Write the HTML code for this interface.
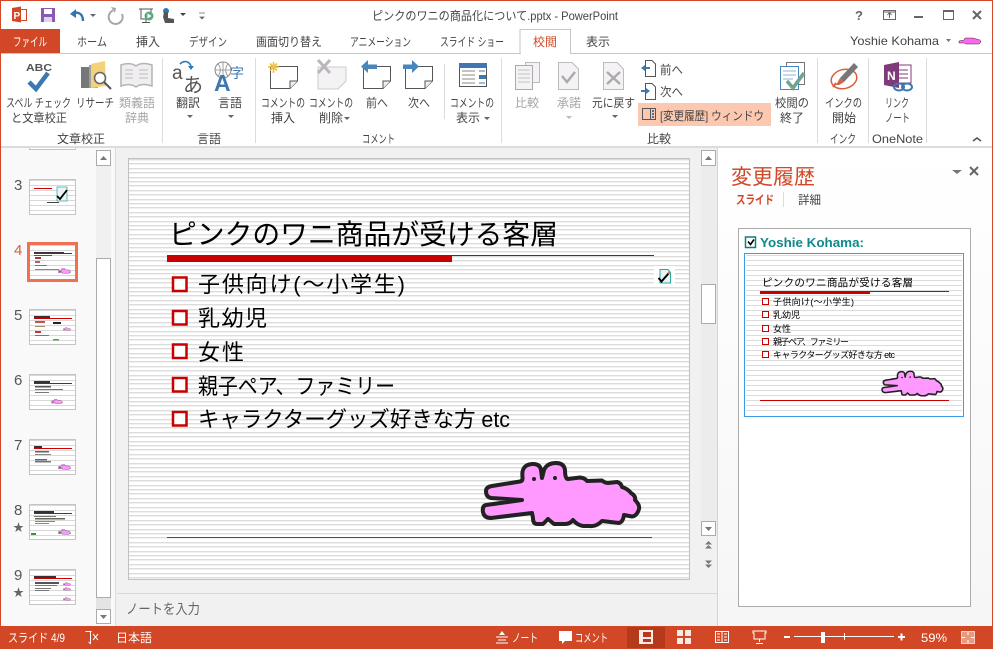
<!DOCTYPE html>
<html lang="ja"><head><meta charset="utf-8"><title>PowerPoint</title>
<style>
html,body{margin:0;padding:0;width:993px;height:649px;overflow:hidden;background:#fff}
svg{display:block;position:absolute;left:0;top:0}
text{font-family:"Liberation Sans","Noto Sans CJK JP",sans-serif;font-size:12px;fill:#444}
.g{fill:#a6a6a6}
.w{fill:#fff}
.s{fill:#000}
</style></head><body>
<svg width="993" height="649" viewBox="0 0 993 649" xmlns="http://www.w3.org/2000/svg" shape-rendering="auto">
<defs>
<pattern id="st" width="4" height="22" patternUnits="userSpaceOnUse" y="159">
<rect width="4" height="22" fill="#fff"/>
<g fill="#dcdcdc"><rect y="0" width="4" height="1"/><rect y="4" width="4" height="1"/><rect y="9" width="4" height="1"/><rect y="13" width="4" height="1"/><rect y="18" width="4" height="1"/></g>
<g fill="#f1f1f1"><rect y="1" width="4" height="1"/><rect y="5" width="4" height="1"/><rect y="10" width="4" height="1"/><rect y="14" width="4" height="1"/><rect y="19" width="4" height="1"/></g>
</pattern>
<pattern id="st2" width="3" height="5" patternUnits="userSpaceOnUse" y="255">
<rect width="3" height="5" fill="#fff"/><rect y="0" width="3" height="1" fill="#dcdcdc"/>
</pattern>
<pattern id="st3" width="3" height="5" patternUnits="userSpaceOnUse">
<rect width="3" height="5" fill="#fff"/><rect y="0" width="3" height="1" fill="#d8d8d8"/>
</pattern>
<linearGradient id="pn" x1="0" y1="0" x2="0" y2="1"><stop offset="0" stop-color="#fff"/><stop offset="1" stop-color="#f6f6f6"/></linearGradient>
<symbol id="croc" viewBox="480 460 162 69" width="162" height="69">
<path d="M486 491Q486 487 492 486L520 481.500Q523 481 522.500 477Q521 465 532 464Q540 463.500 541 470L542 478L544 470Q547 463 556 463Q564 463 565 470Q565 479 568 479L580 477.500Q585 478 587 481L602 480.500Q605 483 608 483L617 482Q621 483 622 487Q628 489 631 493Q636 496 635 500Q640 505 639 509Q637 516 632 516.500L624 515Q623 522 619 523L602 521Q596 527 590 526L583 526Q577 525 573 520Q570 524 565 524L554 524L548 519L543 524L537 524Q533 524 533 518L532 513L491 518Q484 518 483 512Q482 506 486 505L522 500L491 498Q486 497 486 491Z" fill="#ff99ff" stroke="#222" stroke-width="4" stroke-linejoin="round"/>
<circle cx="534" cy="479" r="2" fill="#222"/><circle cx="555" cy="478" r="2" fill="#222"/>
</symbol>
</defs>

<!-- chrome -->
<rect width="993" height="649" fill="#fff"/>
<rect y="0" width="993" height="1" fill="#d24726"/>
<rect y="29" width="60" height="24" fill="#d24726"/>
<rect y="53" width="993" height="1" fill="#c6c6c6"/>
<path d="M520 53V29.500H570.500V53" fill="#fff" stroke="#c6c6c6"/><rect x="521" y="53" width="49" height="1" fill="#fff"/>
<rect y="146" width="993" height="2" fill="#dcdcdc"/>

<!-- QAT -->
<rect x="12.500" y="9.500" width="14" height="11" fill="#fff" stroke="#d24726"/><path d="M12 8L21 6.500V22.500L12 21Z" fill="#d24726"/><text x="13.500" y="19" style="font-size:10px;font-weight:bold;fill:#fff">P</text>
<rect x="41" y="8" width="14" height="14" fill="#8a5bb5"/><rect x="44" y="9" width="8" height="5" fill="#fff"/><rect x="44" y="17" width="8" height="5" fill="#e0d4ea"/>
<path d="M83 21C83 13 77 11 72 14" fill="none" stroke="#2f76b5" stroke-width="2.400"/><path d="M70 14L76 9V18Z" fill="#2f76b5"/>
<path d="M90 14h6l-3 3z" fill="#666"/>
<path d="M113 10.500A7 7 0 1 0 122 14" fill="none" stroke="#a6a6a6" stroke-width="2"/><path d="M111 7l5 1-1 5z" fill="#a6a6a6"/>
<path d="M139 9h14M141 9v10h10V9M146 19v3M142 22.500h8" fill="none" stroke="#555"/><circle cx="149" cy="16" r="4.500" fill="#5aaa80"/><path d="M147.500 13.500l4 2.500-4 2.500z" fill="#fff"/>
<circle cx="166" cy="11" r="3" fill="#2f76b5"/><path d="M164 12h4v6l6 1v4h-9l-2-6z" fill="#555"/>
<path d="M180 13h6l-3 3z" fill="#444"/>
<path d="M199 13h6M200 17h4l-2 2z" fill="#666" stroke="#666" stroke-width=".7"/>

<!-- title -->
<text x="372" y="20" textLength="246" lengthAdjust="spacingAndGlyphs">ピンクのワニの商品化について.pptx - PowerPoint</text>
<text x="855" y="20" style="font-size:13px;font-weight:bold;fill:#666">?</text>
<rect x="883.500" y="10.500" width="12" height="9" fill="none" stroke="#666"/><path d="M889.500 18v-5M887.500 15l2-2.500 2 2.500M884 12h11" stroke="#666" fill="none"/>
<rect x="914" y="16" width="9" height="2" fill="#666"/>
<rect x="943.500" y="10.500" width="10" height="9" fill="none" stroke="#666"/><rect x="943" y="10" width="11" height="2" fill="#666"/>
<path d="M973 11l8 8M981 11l-8 8" stroke="#666" stroke-width="2"/>

<!-- tabs -->
<text x="13" y="46" textLength="34" lengthAdjust="spacingAndGlyphs" class="w">ファイル</text>
<text x="77" y="46" textLength="30" lengthAdjust="spacingAndGlyphs">ホーム</text>
<text x="136" y="46" textLength="24" lengthAdjust="spacingAndGlyphs">挿入</text>
<text x="189" y="46" textLength="38" lengthAdjust="spacingAndGlyphs">デザイン</text>
<text x="256" y="46" textLength="66" lengthAdjust="spacingAndGlyphs">画面切り替え</text>
<text x="350" y="46" textLength="61" lengthAdjust="spacingAndGlyphs">アニメーション</text>
<text x="440" y="46" textLength="64" lengthAdjust="spacingAndGlyphs">スライド ショー</text>
<text x="533" y="46" textLength="24" lengthAdjust="spacingAndGlyphs" style="fill:#d24726">校閲</text>
<text x="586" y="46" textLength="24" lengthAdjust="spacingAndGlyphs">表示</text>
<text x="850" y="45" textLength="89" lengthAdjust="spacingAndGlyphs">Yoshie Kohama</text>
<path d="M946 39h5l-2.500 3z" fill="#777"/>
<path d="M959 41l5-1 1-2h8l7 2 1 2-2 2h-13l-2-1-5 0z" fill="#ff66ee" stroke="#333" stroke-width=".5"/>

<!-- ribbon separators -->
<g fill="#dcdcdc">
<rect x="162" y="58" width="1" height="85"/><rect x="255" y="58" width="1" height="85"/><rect x="501" y="58" width="1" height="85"/>
<rect x="817" y="58" width="1" height="85"/><rect x="868" y="58" width="1" height="85"/><rect x="926" y="58" width="1" height="85"/>
<rect x="444" y="64" width="1" height="55"/>
</g>
<rect x="638" y="103" width="133" height="23" fill="#fcc9b0"/>

<!-- ribbon: proofing -->
<text x="26" y="71" textLength="26" lengthAdjust="spacingAndGlyphs" style="font-size:10.500px;font-weight:bold;fill:#555">ABC</text>
<path d="M29 82l7 7 12-16" fill="none" stroke="#3f78b0" stroke-width="4.500"/>
<rect x="81" y="67" width="9" height="21" fill="#777"/><rect x="89" y="65" width="9" height="23" fill="#a0a0a0"/>
<path d="M91 64l14-3 1 25-15 2z" fill="#f3d27c"/><circle cx="100" cy="78" r="5.500" fill="#fff" stroke="#666" stroke-width="1.600"/><path d="M104 82l7 7" stroke="#555" stroke-width="2"/>
<path d="M121 65c5-2 11-2 15 1c4-3 10-3 16-1v21c-6-2-12-2-16 1c-4-3-10-3-15-1z" fill="#f0eef0" stroke="#b4b4b4" stroke-width="1.500"/><path d="M125 70h8M125 74h8M125 78h8M139 70h9M139 74h9M139 78h9" stroke="#bbb"/>
<text x="6" y="107" textLength="65" lengthAdjust="spacingAndGlyphs">スペル チェック</text>
<text x="11" y="122" textLength="56" lengthAdjust="spacingAndGlyphs">と文章校正</text>
<text x="76" y="107" textLength="38" lengthAdjust="spacingAndGlyphs">リサーチ</text>
<text x="119" y="107" textLength="36" lengthAdjust="spacingAndGlyphs" class="g">類義語</text>
<text x="125" y="122" textLength="24" lengthAdjust="spacingAndGlyphs" class="g">辞典</text>
<text x="57" y="143" textLength="48" lengthAdjust="spacingAndGlyphs">文章校正</text>

<!-- language -->
<text x="172" y="79" style="font-size:19px;fill:#555">a</text>
<text x="183" y="92" style="font-size:20px;fill:#555">あ</text>
<path d="M180 64c4-4 9-3 11 2" fill="none" stroke="#2f76b5" stroke-width="1.600"/><path d="M188 66h6l-3 4z" fill="#2f76b5"/>
<text x="176" y="107" textLength="24" lengthAdjust="spacingAndGlyphs">翻訳</text><path d="M187 115h6l-3 3z" fill="#666"/>
<circle cx="223" cy="70" r="8" fill="none" stroke="#888"/><path d="M215 70h16M223 62v16M218 64c3 3 3 9 0 12M228 64c-3 3-3 9 0 12" stroke="#888" fill="none" stroke-width=".8"/>
<text x="214" y="91" style="font-size:23px;font-weight:bold;fill:#3f78b0">A</text>
<text x="230" y="78" style="font-size:14px;fill:#3f78b0">字</text>
<text x="218" y="107" textLength="24" lengthAdjust="spacingAndGlyphs">言語</text><path d="M228 115h6l-3 3z" fill="#666"/>
<text x="197" y="143" textLength="24" lengthAdjust="spacingAndGlyphs">言語</text>

<!-- comments -->
<path d="M270.500 66.500H297.500V81L290 88.500H270.500Z" fill="#fff" stroke="#555"/><path d="M297.500 81H290V88.500" fill="#eee" stroke="#555"/>
<path d="M268 67h11M273.500 62v11M270 63.500l7 7M277 63.500l-7 7" stroke="#f0c040" stroke-width="1.600"/>
<text x="261" y="107" textLength="44" lengthAdjust="spacingAndGlyphs">コメントの</text>
<text x="271" y="122" textLength="24" lengthAdjust="spacingAndGlyphs">挿入</text>
<path d="M318 67H346V81L338 89H318Z" fill="#f4f2f4" stroke="#ccc"/>
<path d="M318 60l12 13M330 60l-12 13" stroke="#b8b8b8" stroke-width="3"/>
<text x="309" y="107" textLength="44" lengthAdjust="spacingAndGlyphs">コメントの</text>
<text x="319" y="122" textLength="24" lengthAdjust="spacingAndGlyphs">削除</text><path d="M344 117h6l-3 3z" fill="#666"/>
<path d="M363.500 66.500H390.500V81L383 88.500H363.500Z" fill="#fff" stroke="#555"/><path d="M390.500 81H383V88.500" fill="#eee" stroke="#555"/>
<path d="M361 66.500l7-6.500v4.500h9v4.500h-9v4z" fill="#4a86be"/>
<text x="366" y="107" textLength="22" lengthAdjust="spacingAndGlyphs">前へ</text>
<path d="M405.500 66.500H432.500V81L425 88.500H405.500Z" fill="#fff" stroke="#555"/><path d="M432.500 81H425V88.500" fill="#eee" stroke="#555"/>
<path d="M419 66.500l-7-6.500v4.500h-9v4.500h9v4z" fill="#4a86be"/>
<text x="408" y="107" textLength="22" lengthAdjust="spacingAndGlyphs">次へ</text>
<rect x="459.500" y="63.500" width="27" height="23" fill="#fff" stroke="#555"/><rect x="459" y="63" width="28" height="5" fill="#3f78b0"/>
<path d="M462 71h13M462 75h13M462 79h13M462 83h13" stroke="#888"/><path d="M479 71h6M479 83h6" stroke="#3f78b0"/><rect x="479" y="75" width="7" height="4" fill="#3f78b0"/>
<text x="450" y="107" textLength="44" lengthAdjust="spacingAndGlyphs">コメントの</text>
<text x="456" y="122" textLength="24" lengthAdjust="spacingAndGlyphs">表示</text><path d="M484 117h6l-3 3z" fill="#666"/>
<text x="362" y="143" textLength="33" lengthAdjust="spacingAndGlyphs">コメント</text>

<!-- compare -->
<rect x="525.500" y="62.500" width="14" height="20" fill="#f4f2f4" stroke="#bbb"/>
<rect x="515.500" y="65.500" width="17" height="24" fill="#f4f2f4" stroke="#aaa"/><path d="M518 70h12M518 74h12M518 78h12M518 82h12" stroke="#c4c4c4"/>
<path d="M558.500 62.500H572L578.500 69V89.500H558.500Z" fill="#f4f2f4" stroke="#bbb"/><path d="M562 76l5 6 8-10" fill="none" stroke="#aaa" stroke-width="2.400"/>
<path d="M603.500 62.500H617L623.500 69V89.500H603.500Z" fill="#f4f2f4" stroke="#bbb"/><path d="M607 72l13 12M620 72l-13 12" stroke="#aaa" stroke-width="2.400"/>
<text x="515" y="107" textLength="24" lengthAdjust="spacingAndGlyphs" class="g">比較</text>
<text x="557" y="107" textLength="24" lengthAdjust="spacingAndGlyphs" class="g">承諾</text><path d="M566 116h6l-3 3z" fill="#bbb"/>
<text x="592" y="107" textLength="43" lengthAdjust="spacingAndGlyphs">元に戻す</text><path d="M612 115h6l-3 3z" fill="#666"/>
<path d="M645.500 60.500H652L655.500 64V76.500H645.500Z" fill="#fff" stroke="#555"/><path d="M641 68l4-3v2h5v2h-5v2z" fill="#3f78b0"/>
<path d="M645.500 83.500H652L655.500 87V99.500H645.500Z" fill="#fff" stroke="#555"/><path d="M650 91l-4-3v2h-5v2h5v2z" fill="#3f78b0"/>
<text x="660" y="74" textLength="23" lengthAdjust="spacingAndGlyphs">前へ</text>
<text x="660" y="96" textLength="23" lengthAdjust="spacingAndGlyphs">次へ</text>
<rect x="642.500" y="108.500" width="13" height="11" fill="none" stroke="#555"/><path d="M650.500 108.500V119.500" stroke="#555"/><rect x="652" y="110" width="2" height="2" fill="#3f78b0"/><rect x="652" y="113" width="2" height="2" fill="#3f78b0"/><rect x="652" y="116" width="2" height="2" fill="#3f78b0"/>
<text x="660" y="120" textLength="104" lengthAdjust="spacingAndGlyphs">[変更履歴] ウィンドウ</text>
<text x="647" y="143" textLength="24" lengthAdjust="spacingAndGlyphs">比較</text>

<!-- end review -->
<rect x="786.500" y="62.500" width="18" height="22" fill="#fff" stroke="#777"/>
<rect x="780.500" y="66.500" width="18" height="23" fill="#fff" stroke="#4a86be"/><path d="M783 71h13M783 75h13M783 79h10" stroke="#8fb4d8"/>
<path d="M787 81l6 7 11-15" fill="none" stroke="#6fa48e" stroke-width="3.600"/>
<text x="775" y="107" textLength="34" lengthAdjust="spacingAndGlyphs">校閲の</text>
<text x="780" y="122" textLength="24" lengthAdjust="spacingAndGlyphs">終了</text>
<!-- ink -->
<ellipse cx="844" cy="79" rx="13" ry="9.500" fill="none" stroke="#d9603e" stroke-width="1.500" transform="rotate(-15 844 79)"/>
<path d="M840 78l14-15 4 4-14 15z" fill="#777"/><path d="M840 78l4 4-5 3-3 0z" fill="#d9603e"/><path d="M836 83l-3 4" stroke="#d9603e" stroke-width="2"/>
<text x="825" y="107" textLength="37" lengthAdjust="spacingAndGlyphs">インクの</text>
<text x="832" y="122" textLength="24" lengthAdjust="spacingAndGlyphs">開始</text>
<text x="830" y="143" textLength="26" lengthAdjust="spacingAndGlyphs">インク</text>
<!-- onenote -->
<rect x="896" y="65" width="15" height="18" fill="#fff" stroke="#80397b"/><path d="M899 70h9M899 74h9M899 78h9" stroke="#80397b"/>
<path d="M884 65l15-3V88l-15-3z" fill="#80397b"/><text x="887" y="80" style="font-size:12px;font-weight:bold;fill:#fff">N</text>
<ellipse cx="899" cy="87" rx="5" ry="3.500" fill="none" stroke="#3f78b0" stroke-width="2"/><ellipse cx="907" cy="87" rx="5" ry="3.500" fill="none" stroke="#3f78b0" stroke-width="2"/>
<text x="885" y="107" textLength="24" lengthAdjust="spacingAndGlyphs">リンク</text>
<text x="885" y="122" textLength="25" lengthAdjust="spacingAndGlyphs">ノート</text>
<text x="872" y="143" textLength="51" lengthAdjust="spacingAndGlyphs">OneNote</text>
<path d="M973 141l4-3 4 3" fill="none" stroke="#555" stroke-width="1.600"/>

<!-- thumb panel -->
<rect x="1" y="148" width="114" height="478" fill="#f9f9f9"/>
<rect x="0" y="0" width="1" height="649" fill="#d24726"/>
<rect x="992" y="0" width="1" height="649" fill="#d24726"/>
<rect x="96" y="150" width="15" height="474" fill="#f0f0f0"/>
<rect x="96.500" y="150.500" width="14" height="15" fill="#fff" stroke="#ababab"/><path d="M100 160l3.500-4 3.500 4z" fill="#777"/>
<rect x="96.500" y="258.500" width="14" height="339" fill="#fff" stroke="#ababab"/>
<rect x="96" y="598" width="15" height="11" fill="#e4e4e4"/>
<rect x="96.500" y="609.500" width="14" height="14" fill="#fff" stroke="#ababab"/><path d="M100 615h7l-3.500 4z" fill="#777"/>
<rect x="115" y="148" width="1" height="478" fill="#dcdcdc"/>

<text x="14" y="190" style="font-size:15px;fill:#555">3</text>
<text x="14" y="255" style="font-size:15px;fill:#d9603e">4</text>
<text x="14" y="320" style="font-size:15px;fill:#555">5</text>
<text x="14" y="385" style="font-size:15px;fill:#555">6</text>
<text x="14" y="450" style="font-size:15px;fill:#555">7</text>
<text x="14" y="515" style="font-size:15px;fill:#555">8</text>
<text x="14" y="580" style="font-size:15px;fill:#555">9</text>
<text x="13" y="531" style="font-size:11px;fill:#666">★</text>
<text x="13" y="596" style="font-size:11px;fill:#666">★</text>

<path d="M29.500 148V149.500H75.500V148" fill="#fff" stroke="#c4c4c4"/>
<!-- thumb 3 -->
<rect x="29.500" y="179.500" width="46" height="35" fill="url(#st3)" stroke="#c4c4c4"/>
<rect x="34" y="188" width="18" height="1" fill="#c00"/><rect x="57" y="187" width="10" height="14" fill="#e6f6f4" stroke="#30a0a0" stroke-width=".7"/><path d="M57 196l3 3 7-9" stroke="#000" stroke-width="1.800" fill="none"/><rect x="47" y="202" width="12" height="1" fill="#444"/>
<!-- thumb 4 -->
<rect x="28.500" y="243.500" width="48" height="37" fill="url(#st3)" stroke="#f0714f" stroke-width="3"/>
<rect x="34" y="252" width="30" height="2" fill="#333"/><rect x="34" y="253" width="38" height="1" fill="#c00"/>
<rect x="34" y="255" width="18" height="1" fill="#555"/><rect x="35" y="257" width="6" height="2" fill="#a33"/><rect x="35" y="261" width="5" height="2" fill="#a66"/><rect x="35" y="265" width="12" height="1" fill="#777"/><rect x="35" y="269" width="24" height="1" fill="#7a8aa8"/>
<use href="#croc" x="0" y="0" width="13" height="6" transform="translate(58 268)"/>
<!-- thumb 5 -->
<rect x="29.500" y="309.500" width="46" height="35" fill="url(#st3)" stroke="#c4c4c4"/>
<rect x="34" y="316" width="16" height="2" fill="#333"/><rect x="34" y="318" width="38" height="1" fill="#c00"/><rect x="35" y="321" width="10" height="2" fill="#b55"/><rect x="53" y="322" width="8" height="2" fill="#222"/><rect x="35" y="326" width="10" height="1" fill="#a86"/><rect x="35" y="331" width="6" height="2" fill="#c33"/><rect x="35" y="335" width="14" height="1" fill="#777"/><rect x="53" y="339" width="6" height="1.500" fill="#4a4"/>
<use href="#croc" width="8" height="4" transform="translate(63 327)"/>
<!-- thumb 6 -->
<rect x="29.500" y="374.500" width="46" height="35" fill="url(#st3)" stroke="#c4c4c4"/>
<rect x="34" y="381" width="16" height="2" fill="#333"/><rect x="34" y="383" width="38" height="1" fill="#c00"/><rect x="35" y="386" width="16" height="1.500" fill="#555"/><rect x="35" y="389" width="28" height="1" fill="#777"/><rect x="35" y="392" width="14" height="1" fill="#777"/>
<use href="#croc" width="12" height="5" transform="translate(51 399)"/>
<!-- thumb 7 -->
<rect x="29.500" y="439.500" width="46" height="35" fill="url(#st3)" stroke="#c4c4c4"/>
<rect x="34" y="446" width="8" height="2" fill="#333"/><rect x="34" y="448" width="38" height="1" fill="#c00"/><rect x="35" y="451" width="14" height="1.500" fill="#666"/><rect x="35" y="454" width="16" height="1" fill="#888"/><rect x="35" y="459" width="12" height="1.500" fill="#666"/><rect x="35" y="461" width="16" height="1.500" fill="#777"/>
<use href="#croc" width="13" height="6" transform="translate(58 464)"/>
<!-- thumb 8 -->
<rect x="29.500" y="504.500" width="46" height="35" fill="url(#st3)" stroke="#c4c4c4"/>
<rect x="34" y="511" width="20" height="2" fill="#333"/><rect x="34" y="513" width="38" height="1" fill="#c00"/><rect x="34" y="516" width="22" height="1" fill="#777"/><rect x="35" y="518" width="30" height="1.500" fill="#665"/><rect x="35" y="521" width="20" height="1" fill="#888"/><rect x="35" y="523" width="14" height="1" fill="#888"/><rect x="31" y="533" width="5" height="2" fill="#393"/>
<use href="#croc" width="13" height="6" transform="translate(58 529)"/>
<!-- thumb 9 -->
<rect x="29.500" y="569.500" width="46" height="35" fill="url(#st3)" stroke="#c4c4c4"/>
<rect x="34" y="576" width="22" height="2" fill="#333"/><rect x="34" y="578" width="38" height="1" fill="#c00"/><rect x="35" y="582" width="24" height="2" fill="#555"/><rect x="35" y="585" width="22" height="1" fill="#777"/><rect x="35" y="588" width="16" height="1" fill="#777"/><rect x="35" y="590" width="14" height="1" fill="#777"/>
<use href="#croc" width="8" height="4" transform="translate(63 582)"/><use href="#croc" width="8" height="4" transform="translate(63 587)"/><use href="#croc" width="8" height="4" transform="translate(63 597)"/>

<!-- editor -->
<rect x="116" y="148" width="601" height="478" fill="#f1f1f1"/>
<rect x="117" y="593" width="600" height="1" fill="#d8d8d8"/>
<rect x="701" y="150" width="16" height="386" fill="#ececec"/>
<rect x="701.500" y="150.500" width="14" height="15" fill="#fff" stroke="#ababab"/><path d="M705 160l3.500-4 3.500 4z" fill="#777"/>
<rect x="701.500" y="284.500" width="14" height="39" fill="#fff" stroke="#ababab"/>
<rect x="701.500" y="521.500" width="14" height="14" fill="#fff" stroke="#ababab"/><path d="M705 527h7l-3.500 4z" fill="#777"/>
<path d="M708.500 541l-3.500 3.500h7zM708.500 545l-3.500 3.500h7z" fill="#777"/>
<path d="M708.500 568l-3.500-3.500h7zM708.500 564l-3.500-3.500h7z" fill="#777"/>
<rect x="717" y="148" width="1" height="478" fill="#d4d4d4"/>
<text x="126" y="614" textLength="74" lengthAdjust="spacingAndGlyphs" style="font-size:14px;fill:#666">ノートを入力</text>

<!-- slide -->
<rect x="128.500" y="158.500" width="561" height="421" fill="url(#st)" stroke="#c0c0c0"/>
<text x="169" y="244" textLength="389" lengthAdjust="spacingAndGlyphs" class="s" style="font-size:28px">ピンクのワニ商品が受ける客層</text>
<rect x="167" y="255" width="487" height="1" fill="#8a1a1a"/>
<rect x="167" y="255" width="285" height="7" fill="#c80000"/>
<rect x="173" y="277.500" width="13.500" height="13.500" fill="#fff" stroke="#c80000" stroke-width="2.500"/>
<rect x="173" y="311" width="13.500" height="13.500" fill="#fff" stroke="#c80000" stroke-width="2.500"/>
<rect x="173" y="344.500" width="13.500" height="13.500" fill="#fff" stroke="#c80000" stroke-width="2.500"/>
<rect x="173" y="378" width="13.500" height="13.500" fill="#fff" stroke="#c80000" stroke-width="2.500"/>
<rect x="173" y="412" width="13.500" height="13.500" fill="#fff" stroke="#c80000" stroke-width="2.500"/>
<text x="198" y="292" textLength="207" lengthAdjust="spacing" class="s" style="font-size:22px">子供向け(～小学生)</text>
<text x="198" y="326" textLength="69" lengthAdjust="spacing" class="s" style="font-size:22px">乳幼児</text>
<text x="198" y="360" textLength="46" lengthAdjust="spacing" class="s" style="font-size:22px">女性</text>
<text x="198" y="394" textLength="197" lengthAdjust="spacingAndGlyphs" class="s" style="font-size:22px">親子ペア、ファミリー</text>
<text x="198" y="427" textLength="312" lengthAdjust="spacingAndGlyphs" class="s" style="font-size:22px">キャラクターグッズ好きな方 etc</text>
<rect x="654" y="266" width="21" height="21" fill="#fff"/>
<path d="M660 269.500h8l2.500 3v10.500H660z" fill="#e6f6f4" stroke="#30a0a0"/><path d="M658.500 278l3 3.500 7-8" fill="none" stroke="#000" stroke-width="2"/><path d="M668 272l2 2" stroke="#d9803e" stroke-width="2"/>
<use href="#croc" x="0" y="0" transform="translate(480 460)"/>
<rect x="167" y="537" width="485" height="1" fill="#a03030"/>

<!-- changes pane -->
<rect x="718" y="148" width="274" height="478" fill="url(#pn)"/>
<text x="731" y="184" textLength="84" lengthAdjust="spacingAndGlyphs" style="font-size:21px;fill:#d24726">変更履歴</text>
<path d="M952 170h10l-5 4z" fill="#777"/>
<path d="M970 167l8 8M978 167l-8 8" stroke="#666" stroke-width="2"/>
<text x="736" y="204" textLength="38" lengthAdjust="spacingAndGlyphs" style="fill:#d24726;font-weight:bold">スライド</text>
<rect x="783" y="192" width="1" height="15" fill="#dcdcdc"/>
<text x="798" y="204" textLength="23" lengthAdjust="spacingAndGlyphs">詳細</text>
<rect x="738.500" y="228.500" width="232" height="378" fill="#fff" stroke="#ababab"/>
<rect x="745.500" y="237" width="10" height="10.500" fill="#fff" stroke="#0e8080" stroke-width="1.500"/><path d="M748 241.500l2.500 3 3.500-5" fill="none" stroke="#000" stroke-width="1.600"/>
<text x="760" y="247" textLength="104" lengthAdjust="spacingAndGlyphs" style="font-size:13px;font-weight:bold;fill:#0e8a8a">Yoshie Kohama:</text>
<rect x="744.500" y="253.500" width="219" height="163" fill="#fff" stroke="#3d9be9"/>
<rect x="746" y="255" width="216" height="160" fill="url(#st2)"/>
<text x="762" y="286" textLength="151" lengthAdjust="spacing" class="s" style="font-size:10.500px">ピンクのワニ商品が受ける客層</text>
<rect x="760" y="291" width="189" height="1" fill="#c80000"/>
<rect x="760" y="291" width="110" height="3" fill="#c80000"/>
<g fill="#fff" stroke="#c80000" stroke-width="1">
<rect x="762.500" y="298.500" width="6" height="6"/><rect x="762.500" y="311.500" width="6" height="6"/><rect x="762.500" y="325.500" width="6" height="6"/><rect x="762.500" y="338.500" width="6" height="6"/><rect x="762.500" y="351.500" width="6" height="6"/>
</g>
<text x="773" y="305" textLength="81" lengthAdjust="spacing" class="s" style="font-size:9px">子供向け(～小学生)</text>
<text x="773" y="318" textLength="27" lengthAdjust="spacing" class="s" style="font-size:9px">乳幼児</text>
<text x="773" y="332" textLength="18" lengthAdjust="spacing" class="s" style="font-size:9px">女性</text>
<text x="773" y="345" textLength="76" lengthAdjust="spacing" class="s" style="font-size:9px">親子ペア、ファミリー</text>
<text x="773" y="358" textLength="122" lengthAdjust="spacing" class="s" style="font-size:9px">キャラクターグッズ好きな方 etc</text>
<use href="#croc" width="63" height="27" transform="translate(881 370)"/>
<rect x="760" y="400" width="189" height="1" fill="#c80000"/>

<!-- status bar -->
<rect y="626" width="993" height="23" fill="#d24726"/>
<text x="8" y="642" textLength="57" lengthAdjust="spacingAndGlyphs" class="w">スライド 4/9</text>
<path d="M85.500 631.500h5v12l-2-1.500M91.500 631.500h-1v12" fill="none" stroke="#fff"/><path d="M93 634l5 6M98 634l-5 6" stroke="#fff"/>
<text x="116" y="642" textLength="36" lengthAdjust="spacingAndGlyphs" class="w">日本語</text>
<path d="M496 637h12M498 640h8M496 643h12" stroke="#fff"/><path d="M502 631l-3 4h6z" fill="#fff"/>
<text x="512" y="642" textLength="26" lengthAdjust="spacingAndGlyphs" class="w">ノート</text>
<path d="M559 631h13v10h-7l-3 3v-3h-3z" fill="#fff"/>
<text x="575" y="642" textLength="33" lengthAdjust="spacingAndGlyphs" class="w">コメント</text>
<rect x="627" y="627" width="38" height="21" fill="#b53a1b"/>
<rect x="639" y="630" width="14" height="14" fill="#fbe9e3"/><rect x="643" y="632" width="8" height="5" fill="#b53a1b"/><rect x="643" y="639" width="8" height="3" fill="#b53a1b"/>
<g fill="#fbe9e3"><rect x="677" y="630" width="6" height="6"/><rect x="685" y="630" width="6" height="6"/><rect x="677" y="638" width="6" height="6"/><rect x="685" y="638" width="6" height="6"/></g>
<path d="M715.500 631.500h13v11h-13zM722 631v12M717 634h3M717 637h3M717 640h3M724 634h3M724 637h3M724 640h3" fill="none" stroke="#fff"/>
<path d="M753 631h13v2h-1v6h-11v-6h-1zM759.500 639v3M756 643.500h7" fill="none" stroke="#fff"/>
<rect x="784" y="636" width="6" height="2" fill="#fff"/>
<rect x="794" y="636" width="100" height="1" fill="#fff"/><rect x="844" y="633" width="1" height="7" fill="#fff"/><rect x="821" y="632" width="4" height="11" fill="#fff"/>
<path d="M898 637h7M901.500 633.500v7" stroke="#fff" stroke-width="2"/>
<text x="921" y="642" textLength="26" lengthAdjust="spacingAndGlyphs" class="w">59%</text>
<rect x="961.500" y="631.500" width="13" height="12" fill="#e89a80" stroke="#f4d0c4"/><path d="M968 632v3M968 640v3M962 637.500h3M971 637.500h3" stroke="#fff"/>
</svg>
</body></html>
